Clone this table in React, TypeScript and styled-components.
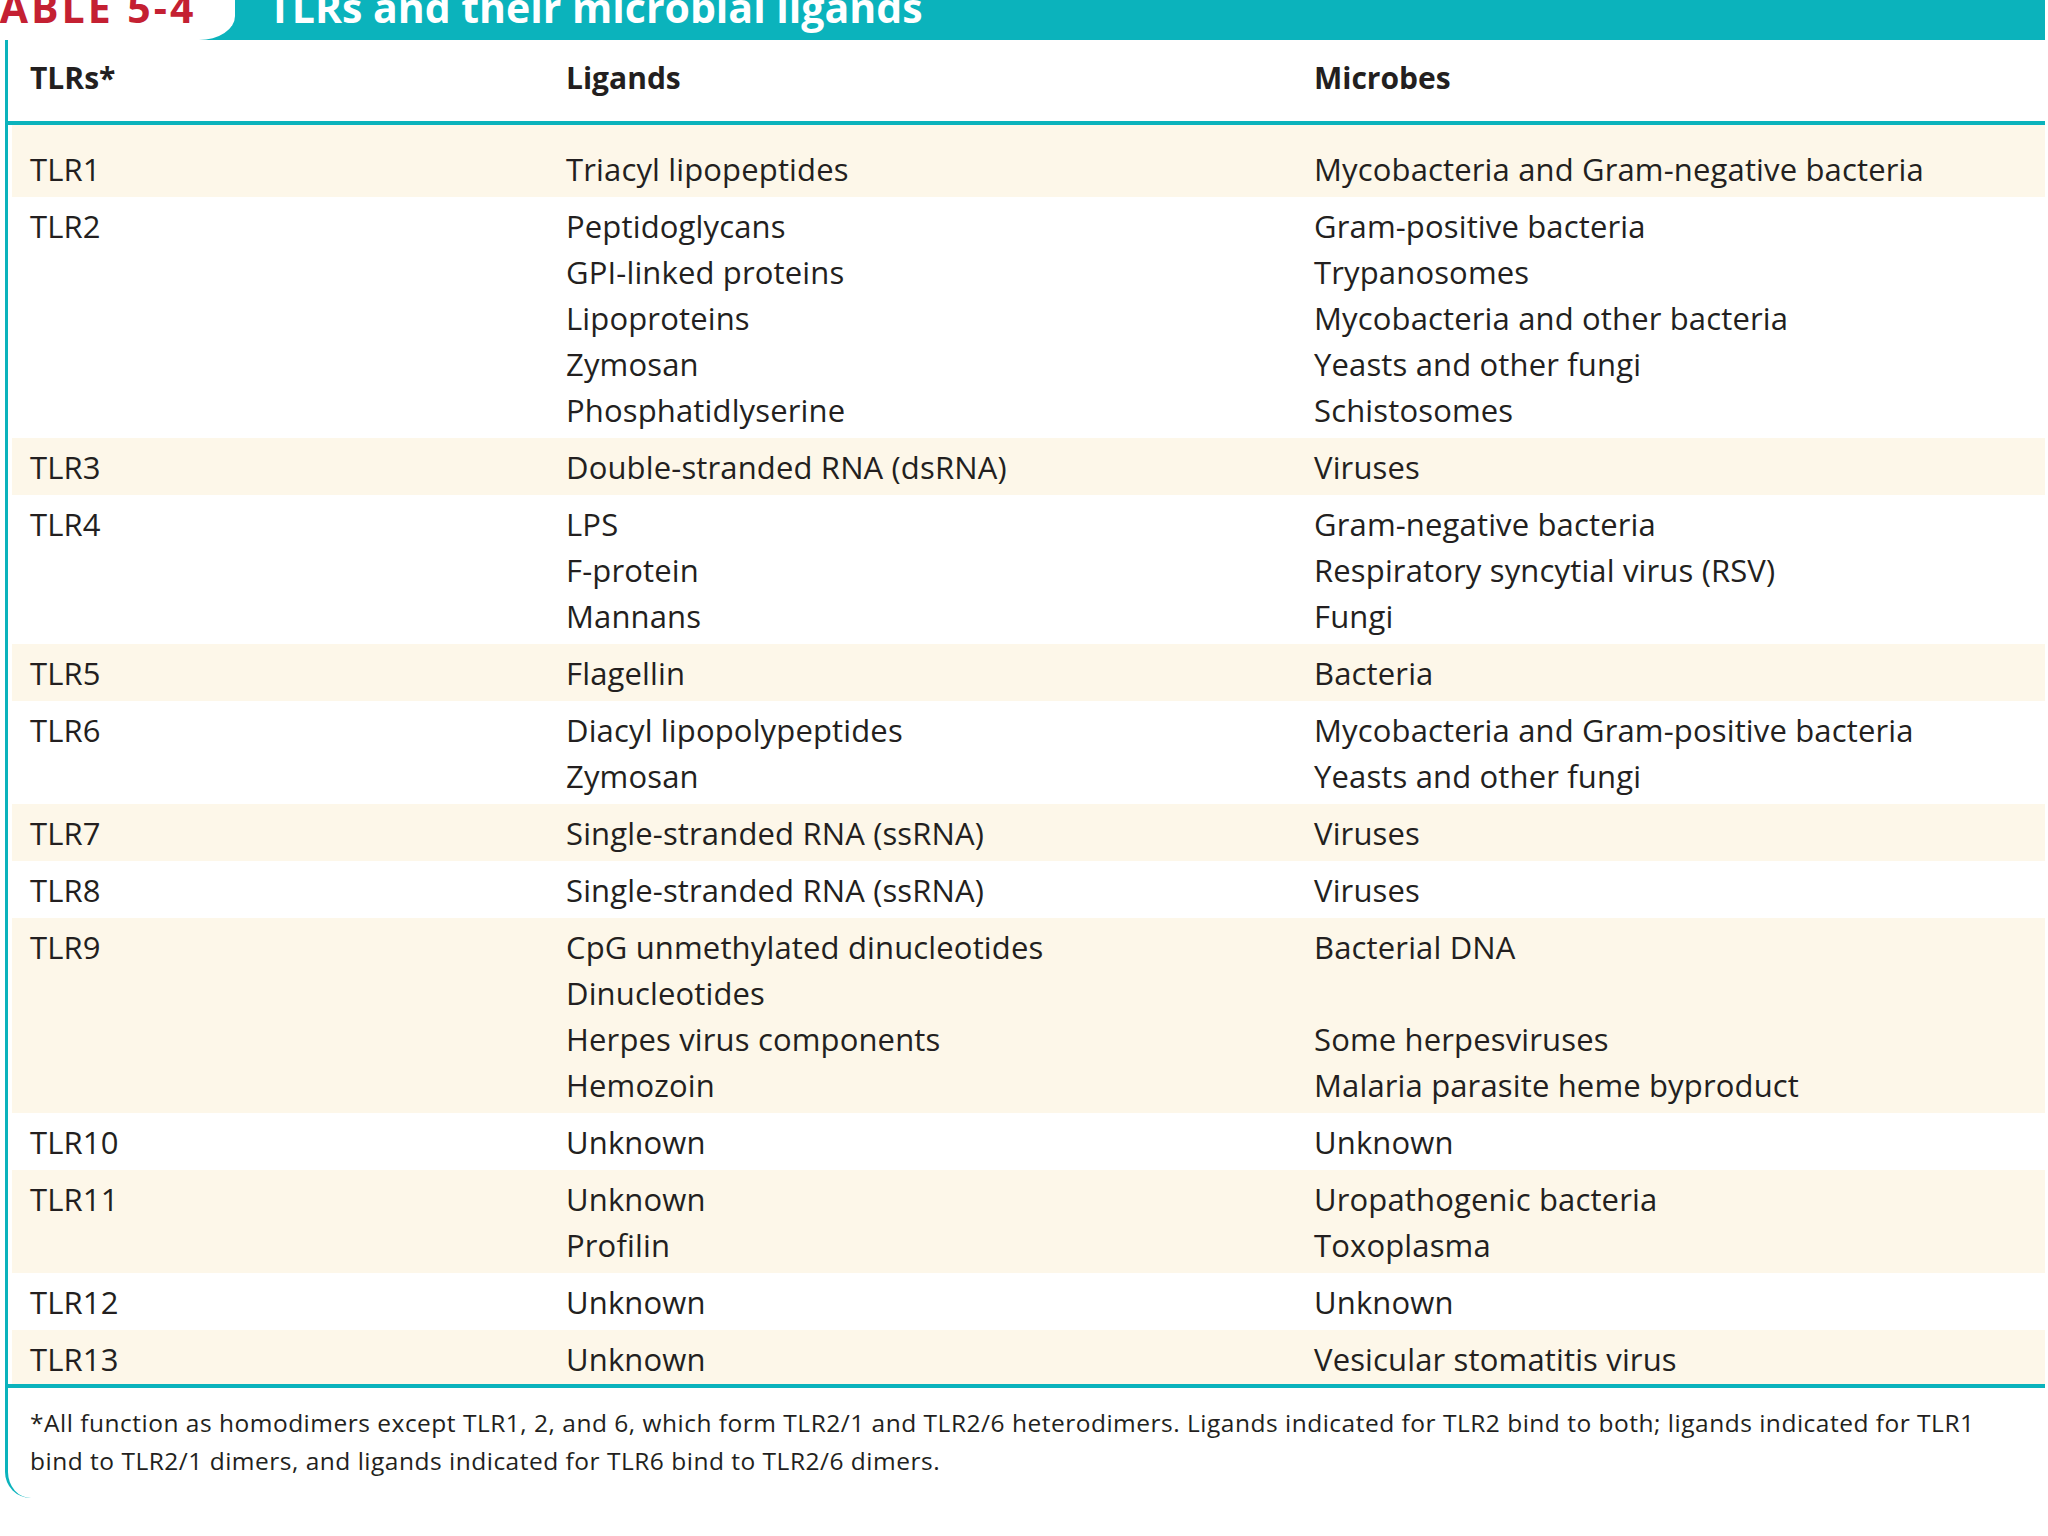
import styled, { createGlobalStyle } from "styled-components";

const TEAL = "#0bb3bc";
const CREAM = "#fdf7e9";
const INK = "#231f20";

interface ITlrRow {
  receptor: string;
  ligands: string[];
  microbes: string[];
}

const rows: ITlrRow[] = [
  {
    receptor: "TLR1",
    ligands: ["Triacyl lipopeptides"],
    microbes: ["Mycobacteria and Gram-negative bacteria"],
  },
  {
    receptor: "TLR2",
    ligands: [
      "Peptidoglycans",
      "GPI-linked proteins",
      "Lipoproteins",
      "Zymosan",
      "Phosphatidlyserine",
    ],
    microbes: [
      "Gram-positive bacteria",
      "Trypanosomes",
      "Mycobacteria and other bacteria",
      "Yeasts and other fungi",
      "Schistosomes",
    ],
  },
  {
    receptor: "TLR3",
    ligands: ["Double-stranded RNA (dsRNA)"],
    microbes: ["Viruses"],
  },
  {
    receptor: "TLR4",
    ligands: ["LPS", "F-protein", "Mannans"],
    microbes: [
      "Gram-negative bacteria",
      "Respiratory syncytial virus (RSV)",
      "Fungi",
    ],
  },
  { receptor: "TLR5", ligands: ["Flagellin"], microbes: ["Bacteria"] },
  {
    receptor: "TLR6",
    ligands: ["Diacyl lipopolypeptides", "Zymosan"],
    microbes: [
      "Mycobacteria and Gram-positive bacteria",
      "Yeasts and other fungi",
    ],
  },
  {
    receptor: "TLR7",
    ligands: ["Single-stranded RNA (ssRNA)"],
    microbes: ["Viruses"],
  },
  {
    receptor: "TLR8",
    ligands: ["Single-stranded RNA (ssRNA)"],
    microbes: ["Viruses"],
  },
  {
    receptor: "TLR9",
    ligands: [
      "CpG unmethylated dinucleotides",
      "Dinucleotides",
      "Herpes virus components",
      "Hemozoin",
    ],
    microbes: [
      "Bacterial DNA",
      "",
      "Some herpesviruses",
      "Malaria parasite heme byproduct",
    ],
  },
  { receptor: "TLR10", ligands: ["Unknown"], microbes: ["Unknown"] },
  {
    receptor: "TLR11",
    ligands: ["Unknown", "Profilin"],
    microbes: ["Uropathogenic bacteria", "Toxoplasma"],
  },
  { receptor: "TLR12", ligands: ["Unknown"], microbes: ["Unknown"] },
  {
    receptor: "TLR13",
    ligands: ["Unknown"],
    microbes: ["Vesicular stomatitis virus"],
  },
];

const GlobalStyle = createGlobalStyle`
  body {
    margin: 0;
    background: #ffffff;
    color: ${INK};
    font-family: "Open Sans", "Noto Sans", sans-serif;
  }
`;

const Page = styled.div`
  width: 2045px;
`;

const TitleBar = styled.header`
  display: flex;
  align-items: flex-start;
  height: 40px;
  background: ${TEAL};
  overflow: hidden;
`;

const Tab = styled.div`
  flex: none;
  width: 235px;
  height: 40px;
  background: #ffffff;
  border-bottom-right-radius: 36px 24px;
  overflow: hidden;
`;

const TitleText = styled.span`
  display: block;
  margin-top: -13px;
  font-size: 41px;
  font-weight: 700;
  line-height: 1;
  white-space: nowrap;
`;

const TabLabel = styled(TitleText)`
  margin-left: -27px;
  letter-spacing: 3px;
  color: #c42032;
`;

const Title = styled(TitleText)`
  margin-left: 33px;
  color: #ffffff;
`;

const Frame = styled.section`
  margin-left: 5px;
  padding-bottom: 18px;
  border-left: 3px solid ${TEAL};
  border-bottom-left-radius: 26px;
`;

const Columns = styled.div`
  display: grid;
  grid-template-columns: 536px 748px 1fr;
`;

const HeaderRow = styled(Columns)`
  height: 85px;
  align-items: center;
  padding: 0 0 7px 22px;
  box-sizing: border-box;
  border-bottom: 4px solid ${TEAL};
  font-size: 30px;
  font-weight: 700;
`;

const Body = styled.div`
  border-bottom: 4px solid ${TEAL};
`;

const Row = styled(Columns)<{ $shaded: boolean }>`
  margin-left: 4px;
  padding: 5.5px 0 5.5px 18px;
  background: ${(p) => (p.$shaded ? CREAM : "#ffffff")};
  font-size: 31px;
  letter-spacing: 0.15px;

  &:first-child {
    padding-top: 20.5px;
  }
  &:last-child {
    padding-bottom: 2px;
  }
`;

const Cell = styled.div`
  display: flex;
  flex-direction: column;
`;

const Line = styled.span`
  min-height: 46px;
  line-height: 46px;
  white-space: nowrap;
`;

const Footnote = styled.p`
  margin: 0;
  padding: 16px 0 0 22px;
  font-size: 24.5px;
  letter-spacing: 0.5px;
  line-height: 38px;
  white-space: nowrap;
`;

const CellLines = ({ lines }: { lines: string[] }) => (
  <Cell>
    {lines.map((line, i) => (
      <Line key={i}>{line}</Line>
    ))}
  </Cell>
);

export default function App() {
  return (
    <Page>
      <GlobalStyle />
      <TitleBar>
        <Tab>
          <TabLabel>TABLE 5-4</TabLabel>
        </Tab>
        <Title>TLRs and their microbial ligands</Title>
      </TitleBar>
      <Frame>
        <HeaderRow>
          <span>TLRs*</span>
          <span>Ligands</span>
          <span>Microbes</span>
        </HeaderRow>
        <Body>
          {rows.map((row, i) => (
            <Row key={row.receptor} $shaded={i % 2 === 0}>
              <CellLines lines={[row.receptor]} />
              <CellLines lines={row.ligands} />
              <CellLines lines={row.microbes} />
            </Row>
          ))}
        </Body>
        <Footnote>
          *All function as homodimers except TLR1, 2, and 6, which form TLR2/1
          and TLR2/6 heterodimers. Ligands indicated for TLR2 bind to both;
          ligands indicated for TLR1
          <br />
          bind to TLR2/1 dimers, and ligands indicated for TLR6 bind to TLR2/6
          dimers.
        </Footnote>
      </Frame>
    </Page>
  );
}
